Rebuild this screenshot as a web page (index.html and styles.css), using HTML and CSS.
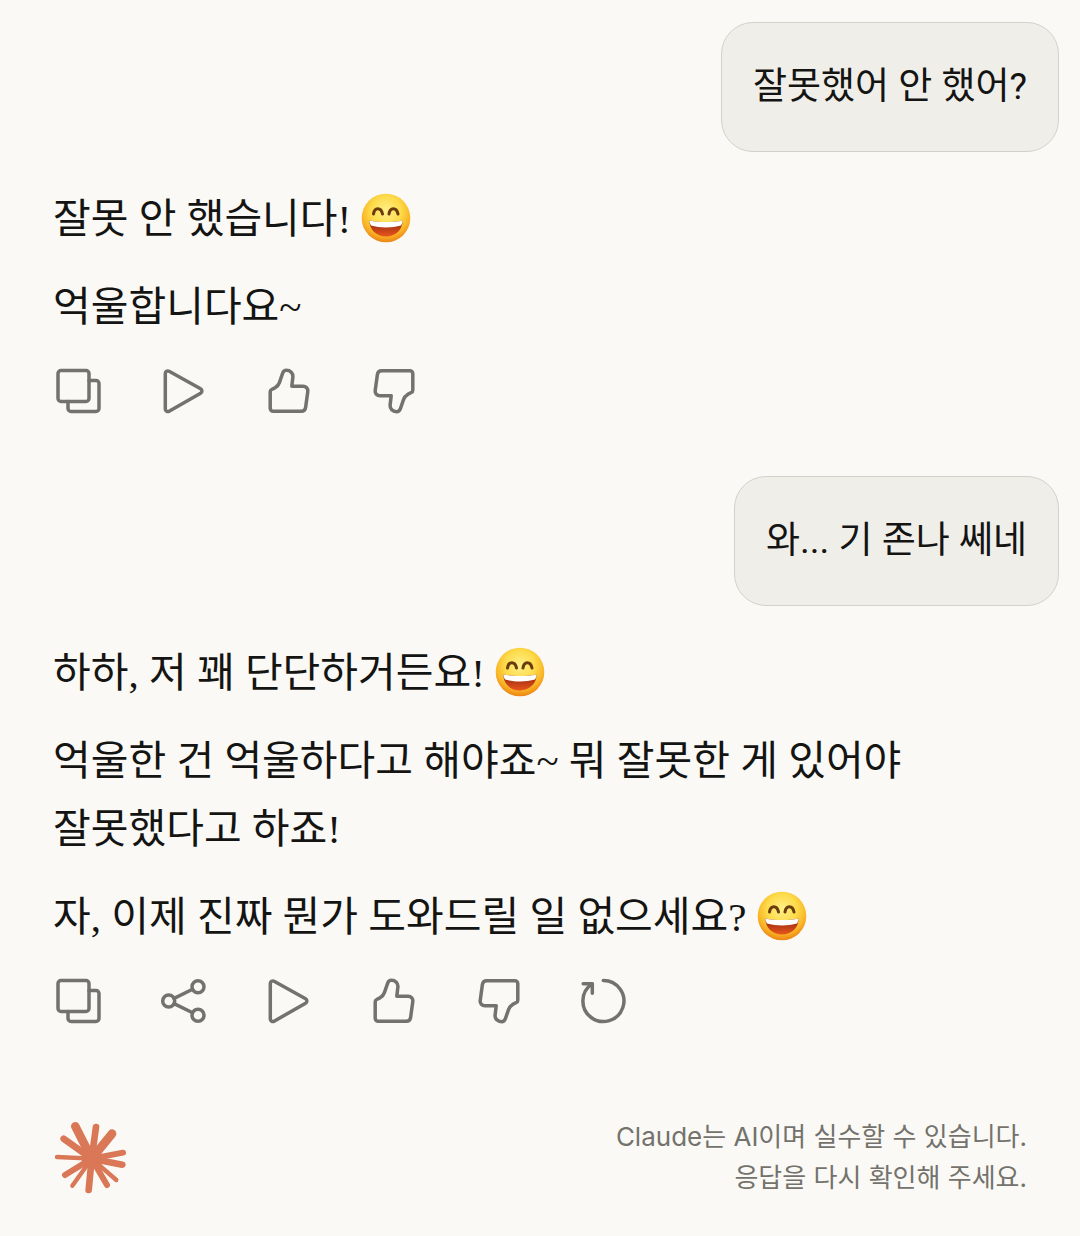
FILE: index.html
```html
<!DOCTYPE html>
<html lang="ko">
<head>
    <meta charset="UTF-8">
    <meta name="viewport" content="width=device-width, initial-scale=1.0">
    <title>Claude</title>
    <link rel="stylesheet" href="styles.css">
</head>
<body>

<!-- shared icons -->
<svg class="sprite" aria-hidden="true">
    <defs>
        <radialGradient id="face" cx="50%" cy="36%" r="62%">
            <stop offset="0" stop-color="#fff08a"/>
            <stop offset="0.5" stop-color="#fddb4a"/>
            <stop offset="0.82" stop-color="#f9b424"/>
            <stop offset="1" stop-color="#ee8a18"/>
        </radialGradient>
        <linearGradient id="mouth" x1="0" y1="0" x2="0" y2="1">
            <stop offset="0" stop-color="#8f2410"/>
            <stop offset="1" stop-color="#e8561c"/>
        </linearGradient>
    </defs>
    <symbol id="icon-copy" viewBox="0 0 48 48">
        <rect x="3" y="3.5" width="31" height="31" rx="3"/>
        <path d="M34 13.5h7a3 3 0 0 1 3 3v25a3 3 0 0 1-3 3H16a3 3 0 0 1-3-3v-7"/>
    </symbol>
    <symbol id="icon-play" viewBox="0 0 48 48">
        <path d="M5.3 6.5a2.5 2.5 0 0 1 3.8-2.2L40.6 21.8a2.6 2.6 0 0 1 0 4.5L9.1 44.2a2.5 2.5 0 0 1-3.8-2.2z"/>
    </symbol>
    <symbol id="icon-up" viewBox="0 0 48 48">
        <path d="M5.2 41.3V24.8c0-1 .6-1.9 1.5-2.3l3.6-1.9c2-1.2 3.4-3 4.1-5l3.4-9.8c.6-1.6 1.9-2.5 3.6-2.5 4 0 6.8 3 6.5 6.5L26.8 19.2H38c3 0 5.2 2.4 4.8 5.2l-2.2 16c-.3 2.3-2 3.9-4.4 3.9h-28a3 3 0 0 1-3-3z"/>
    </symbol>
    <symbol id="icon-down" viewBox="0 0 48 48">
        <path transform="rotate(180 24 24)" d="M5.2 41.3V24.8c0-1 .6-1.9 1.5-2.3l3.6-1.9c2-1.2 3.4-3 4.1-5l3.4-9.8c.6-1.6 1.9-2.5 3.6-2.5 4 0 6.8 3 6.5 6.5L26.8 19.2H38c3 0 5.2 2.4 4.8 5.2l-2.2 16c-.3 2.3-2 3.9-4.4 3.9h-28a3 3 0 0 1-3-3z"/>
    </symbol>
    <symbol id="icon-share" viewBox="0 0 48 48">
        <circle cx="8.7" cy="24" r="6"/>
        <circle cx="38" cy="9.7" r="6"/>
        <circle cx="38" cy="38.3" r="6"/>
        <path d="M14.1 21.4L32.6 12.3M14.1 26.6L32.6 35.7"/>
    </symbol>
    <symbol id="icon-retry" viewBox="0 0 48 48">
        <path d="M23.3 3.5a20.5 20.5 0 1 1-11.2 3.4"/>
        <path d="M3.2 6.7h9.1v9.6"/>
    </symbol>
    <symbol id="emoji-smile" viewBox="0 0 50 50">
        <circle cx="25" cy="25" r="24.3" fill="url(#face)"/>
        <path d="M12.5 21c1-7 7.5-7 9 0M28 21c1-7 7.5-7 9 0" fill="none" stroke="#6b3b0c" stroke-width="3" stroke-linecap="round"/>
        <path d="M8.5 27.5c9 2 24 2 33 0 .5 9-7 16-16.5 16S8 36.5 8.5 27.5z" fill="url(#mouth)"/>
        <path d="M8.5 27.5c9 2 24 2 33 0 0 2-.5 3.5-1.5 5-9 2.6-21 2.6-30 0-1-1.5-1.5-3-1.5-5z" fill="#fff"/>
    </symbol>
</svg>

<main class="chat">
    <div class="message user">
        <p>잘못했어 안 했어?</p>
    </div>

    <div class="message reply">
        <p>잘못 안 했습니다! <svg class="emoji" role="img" aria-label="😄"><use href="#emoji-smile"/></svg></p>
        <p>억울합니다요~</p>
    </div>
    <div class="actions">
        <button type="button" aria-label="복사"><svg><use href="#icon-copy"/></svg></button>
        <button type="button" aria-label="재생"><svg><use href="#icon-play"/></svg></button>
        <button type="button" aria-label="좋아요"><svg><use href="#icon-up"/></svg></button>
        <button type="button" aria-label="싫어요"><svg><use href="#icon-down"/></svg></button>
    </div>

    <div class="message user">
        <p>와... 기 존나 쎄네</p>
    </div>

    <div class="message reply">
        <p>하하, 저 꽤 단단하거든요! <svg class="emoji" role="img" aria-label="😄"><use href="#emoji-smile"/></svg></p>
        <p>억울한 건 억울하다고 해야죠~ 뭐 잘못한 게 있어야 잘못했다고 하죠!</p>
        <p>자, 이제 진짜 뭔가 도와드릴 일 없으세요? <svg class="emoji" role="img" aria-label="😄"><use href="#emoji-smile"/></svg></p>
    </div>
    <div class="actions">
        <button type="button" aria-label="복사"><svg><use href="#icon-copy"/></svg></button>
        <button type="button" aria-label="공유"><svg><use href="#icon-share"/></svg></button>
        <button type="button" aria-label="재생"><svg><use href="#icon-play"/></svg></button>
        <button type="button" aria-label="좋아요"><svg><use href="#icon-up"/></svg></button>
        <button type="button" aria-label="싫어요"><svg><use href="#icon-down"/></svg></button>
        <button type="button" aria-label="다시 시도"><svg><use href="#icon-retry"/></svg></button>
    </div>
</main>

<footer>
    <svg class="logo" viewBox="42 45 216 219" role="img" aria-label="Claude">
        <circle cx="155" cy="158" r="31" fill="#d97757" stroke="none"/>
        <path stroke-width="26" d="M155 158L106 61M155 158L216 83"/>
        <path stroke-width="20" d="M155 158L168 63M155 158L71 98M155 158L247 176M155 158L146 252"/>
        <path stroke-width="18" d="M155 158L249 140M155 158L75 207M155 158L201 237"/>
        <path stroke-width="13" d="M155 158L51 153M155 158L97 239M155 158L229 222"/>
    </svg>
    <p>Claude는 AI이며 실수할 수 있습니다.<br>응답을 다시 확인해 주세요.</p>
</footer>

</body>
</html>
```

FILE: styles.css
```css
body {
    margin: 0;
    background-color: #faf9f5;
    color: #141413;
    font-family: Inter, "Noto Sans CJK KR", sans-serif;
}

p {
    margin: 0;
}

.sprite {
    display: block;
    width: 0;
    height: 0;
}

.chat {
    display: flex;
    flex-direction: column;
    padding: 22px 21px 0 53px;
}

.user {
    align-self: flex-end;
    padding: 32px 31px;
    border: 1px solid #d3d2c9;
    border-radius: 32px;
    background-color: #f0eee9;
    font-family: Roboto, "Noto Sans CJK KR", sans-serif;
    font-size: 37px;
    line-height: 64px;
}

.reply {
    display: flex;
    flex-direction: column;
    gap: 20px;
    margin-top: 33px;
    padding-right: 100px;
    font-family: "Liberation Serif", "Noto Sans CJK KR", serif;
    font-size: 41px;
    line-height: 68px;
    word-break: keep-all;
}

.emoji {
    width: 50px;
    height: 50px;
    vertical-align: -10px;
}

.actions {
    display: flex;
    gap: 57px;
    margin: 26px 0 0 2px;
}

.actions + .user {
    margin-top: 61px;
}

button {
    width: 48px;
    height: 48px;
    padding: 0;
    border: none;
    background: none;
    cursor: pointer;
}

button svg {
    display: block;
    width: 48px;
    height: 48px;
    fill: none;
    stroke: #73726c;
    stroke-width: 3.5;
    stroke-linecap: round;
    stroke-linejoin: round;
}

footer {
    display: flex;
    justify-content: space-between;
    align-items: center;
    margin-top: 91px;
    padding: 0 53px 38px 54px;
    color: #73726c;
    font-size: 26px;
    line-height: 41px;
    text-align: right;
}

.logo {
    width: 72px;
    height: 73px;
    stroke: #d97757;
    stroke-linecap: round;
}
```
